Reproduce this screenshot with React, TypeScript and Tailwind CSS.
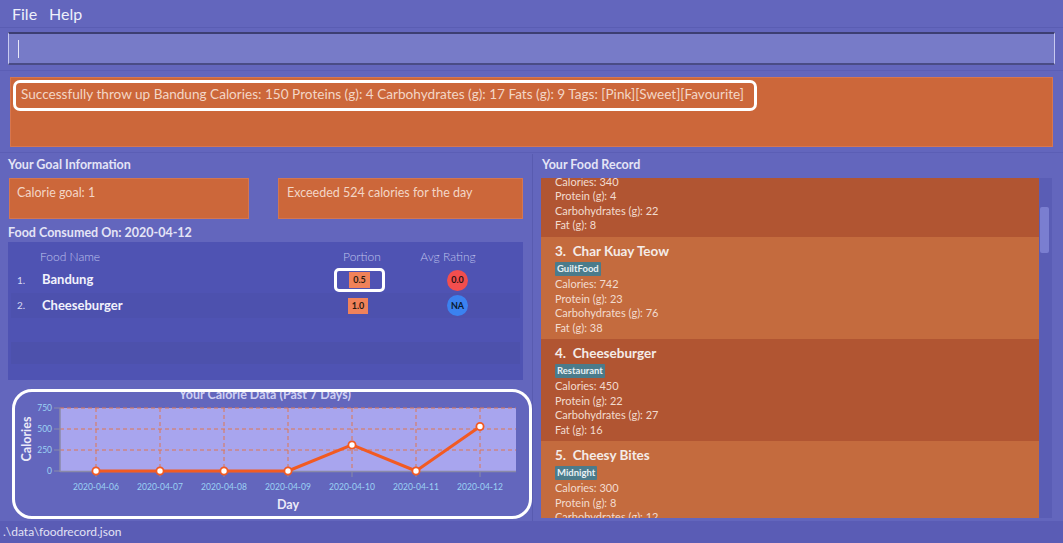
import React from "react";

const font = { fontFamily: 'Lato, "Noto Sans", sans-serif' };

type Food = { n: number; name: string; tag: string; cal: number; p: number; c: number; f: number };

const foods: Food[] = [
  { n: 3, name: "Char Kuay Teow", tag: "GuiltFood", cal: 742, p: 23, c: 76, f: 38 },
  { n: 4, name: "Cheeseburger", tag: "Restaurant", cal: 450, p: 22, c: 27, f: 16 },
  { n: 5, name: "Cheesy Bites", tag: "Midnight", cal: 300, p: 8, c: 12, f: 10 },
];

function Lines({ cal, p, c, f }: { cal: number; p: number; c: number; f: number }) {
  return (
    <div className="text-[11px] leading-[14.5px] text-[#f2dccf]">
      <div>Calories: {cal}</div>
      <div>Protein (g): {p}</div>
      <div>Carbohydrates (g): {c}</div>
      <div>Fat (g): {f}</div>
    </div>
  );
}

function Card({ f, dark }: { f: Food; dark: boolean }) {
  return (
    <div className={`h-[102px] shrink-0 pl-[14px] pt-[4px] ${dark ? "bg-[#b15532]" : "bg-[#c46b3e]"}`}>
      <div className="text-[13.5px] leading-[20px] font-bold text-[#f4ece8]">
        {f.n}.&nbsp;&nbsp;{f.name}
      </div>
      <div className="mt-[1px] mb-[1px] w-fit bg-[#4b7b8b] px-[2px] text-[9.5px] leading-[14px] font-bold text-[#e8f0f4] rounded-[1px]">
        {f.tag}
      </div>
      <Lines cal={f.cal} p={f.p} c={f.c} f={f.f} />
    </div>
  );
}

function Chart() {
  const xs = [84, 148, 212, 276, 340, 404, 468];
  const dates = ["2020-04-06", "2020-04-07", "2020-04-08", "2020-04-09", "2020-04-10", "2020-04-11", "2020-04-12"];
  const vals = [0, 0, 0, 0, 310, 0, 530];
  const y = (v: number) => 82 - (v / 750) * 63;
  const pts = xs.map((x, i) => `${x},${y(vals[i])}`).join(" ");
  return (
    <svg width="520" height="130" className="block">
      <text x="253" y="10" textAnchor="middle" fontSize="12.5" fontWeight="700" fill="#cfd0f2" style={font}>
        Your Calorie Data (Past 7 Days)
      </text>
      <rect x="48" y="19" width="456" height="63" fill="#a8a5ee" />
      {[19, 40, 61].map((yy) => (
        <line key={yy} x1="48" x2="504" y1={yy} y2={yy} stroke="#de7650" strokeWidth="1" strokeDasharray="4 3" />
      ))}
      {xs.map((x) => (
        <line key={x} x1={x} x2={x} y1="19" y2="82" stroke="#de7650" strokeWidth="1" strokeDasharray="4 3" />
      ))}
      <line x1="48" x2="504" y1="82.5" y2="82.5" stroke="#8a8aa8" strokeWidth="1.5" />
      <line x1="48" x2="48" y1="19" y2="83" stroke="#8a8aa8" strokeWidth="1.5" />
      {[
        [19, "750"],
        [40, "500"],
        [61, "250"],
        [82, "0"],
      ].map(([yy, l]) => (
        <g key={l as string}>
          <line x1="42" x2="48" y1={yy as number} y2={yy as number} stroke="#8a8aa8" strokeWidth="1" />
          <text x="40" y={(yy as number) + 3} textAnchor="end" fontSize="8.5" fill="#9cd2f4" style={font}>
            {l}
          </text>
        </g>
      ))}
      {xs.map((x, i) => (
        <g key={"t" + x}>
          <line x1={x} x2={x} y1="83" y2="88" stroke="#8a8aa8" strokeWidth="1" />
          <text x={x} y="101" textAnchor="middle" fontSize="8.5" fill="#9cd2f4" style={font}>
            {dates[i]}
          </text>
        </g>
      ))}
      <text x="276" y="120" textAnchor="middle" fontSize="12.5" fontWeight="700" fill="#eceaf8" style={font}>
        Day
      </text>
      <text
        x="0"
        y="0"
        transform="translate(19 50) rotate(-90)"
        textAnchor="middle"
        fontSize="12.5"
        fontWeight="700"
        fill="#eceaf8"
        style={font}
      >
        Calories
      </text>
      <polyline points={pts} fill="none" stroke="#f25a22" strokeWidth="3" strokeLinejoin="round" />
      {xs.map((x, i) => (
        <circle key={"c" + x} cx={x} cy={y(vals[i])} r="3.6" fill="#ffffff" stroke="#f25a22" strokeWidth="1.8" />
      ))}
    </svg>
  );
}

export default function App() {
  return (
    <div className="w-[1063px] h-[543px] bg-[#6366bd] flex flex-col overflow-hidden text-[#e6e6f6]" style={font}>
      {/* menu */}
      <div className="h-[28px] flex items-center gap-[12px] pl-[12px] text-[16px] text-[#eef0fa] border-b border-[#5a5db3]">
        <span>File</span>
        <span>Help</span>
      </div>
      {/* command box */}
      <div className="px-[8px] pt-[4px] pb-[5px] border-b border-[#5b5eb5]">
        <div className="h-[33px] bg-[#777bc8] border-t-2 border-b-2 border-t-[#3c3e72] border-b-[#4a4c86] border-l border-l-[#c8caf0] border-r border-r-[#c8caf0] flex items-center pl-[9px]">
          <div className="w-[1px] h-[18px] bg-[#e8e8f8]" />
        </div>
      </div>
      {/* result */}
      <div className="px-[10px] pt-[6px] pb-[5px] border-b border-[#5b5eb5]">
        <div className="h-[70px] bg-[#cc673a] border border-[#d67650] pl-[2px] pt-[2px]">
          <span className="block w-fit border-[3px] border-white rounded-[7px] pl-[5px] pr-[10px] h-[31px] leading-[23px] text-[13.6px] text-[#f3d6c6] whitespace-nowrap">
            Successfully throw up Bandung Calories: 150 Proteins (g): 4 Carbohydrates (g): 17 Fats (g): 9 Tags: [Pink][Sweet][Favourite]
          </span>
        </div>
      </div>
      {/* main */}
      <div className="flex flex-1 min-h-0 pt-[1px]">
        {/* left */}
        <div className="w-[533px] shrink-0 border-r border-[#585bb0] pl-[8px] flex flex-col relative">
          <div className="h-[24px] pt-[2px] text-[12.5px] leading-[18px] font-bold text-[#e4e4f6]">Your Goal Information</div>
          <div className="flex justify-between pr-[9px] pl-[1px] h-[41px]">
            <div className="w-[240px] bg-[#cc673a] border border-[#d37652] pl-[7px] pt-[5px] text-[12.5px] text-[#f3d6c6]">Calorie goal: 1</div>
            <div className="w-[245px] bg-[#cc673a] border border-[#d37652] pl-[8px] pt-[5px] text-[12.5px] text-[#f3d6c6]">
              Exceeded 524 calories for the day
            </div>
          </div>
          <div className="h-[23px] pt-[5px] text-[12.5px] leading-[18px] font-bold text-[#e4e4f6]">Food Consumed On: 2020-04-12</div>
          <div className="w-[515px] h-[138px] bg-[#4f53b3] px-[3px] flex flex-col">
            <div className="h-[25px] flex items-end pb-[1px] text-[12px] text-[#bfc2ec] font-light">
              <span className="pl-[29px] w-[321px]">Food Name</span>
              <span className="w-[60px] text-center">Portion</span>
              <span className="ml-[26px] w-[60px] text-center">Avg Rating</span>
            </div>
            <div className="h-[26px] flex items-center">
              <span className="w-[31px] pl-[6px] text-[10px] text-[#d8daf4]">1.</span>
              <span className="w-[292px] text-[13px] font-bold text-[#f2f2fc]">Bandung</span>
              <span className="w-[51px] h-[24px] border-[3px] border-white rounded-[5px] flex items-center justify-center">
                <span className="bg-[#f0825a] text-[#2a1a10] text-[9px] font-bold w-[21px] text-center leading-[16px]">0.5</span>
              </span>
              <span className="ml-[62px] w-[21px] h-[21px] rounded-full bg-[#f24e4e] text-[#2a1010] text-[9px] font-bold flex items-center justify-center">0.0</span>
            </div>
            <div className="h-[25px] flex items-center bg-[#4d51ae]">
              <span className="w-[31px] pl-[6px] text-[10px] text-[#d8daf4]">2.</span>
              <span className="w-[292px] text-[13px] font-bold text-[#f2f2fc]">Cheeseburger</span>
              <span className="w-[51px] flex items-center justify-center pr-[3px]">
                <span className="bg-[#f0825a] text-[#2a1a10] text-[9px] font-bold w-[20px] text-center leading-[16px]">1.0</span>
              </span>
              <span className="ml-[62px] w-[21px] h-[21px] rounded-full bg-[#3b82f0] text-[#0a1a30] text-[9px] font-bold flex items-center justify-center">NA</span>
            </div>
            <div className="h-[24px]" />
            <div className="h-[22px] bg-[#4d51ac]" />
          </div>
          <div className="relative mt-[9px] ml-[4px] w-[520px] h-[130px]">
            <Chart />
            <div className="absolute inset-0 border-[3px] border-white rounded-[20px] pointer-events-none" />
          </div>
        </div>
        {/* right */}
        <div className="flex-1 pl-[8px] flex flex-col">
          <div className="h-[24px] pt-[2px] pl-[1px] text-[12.5px] leading-[18px] font-bold text-[#e4e4f6]">Your Food Record</div>
          <div className="w-[511px] h-[340px] bg-[#5a5db5] flex overflow-hidden">
            <div className="w-[498px] overflow-hidden flex flex-col">
              <div className="h-[59px] shrink-0 bg-[#b15532] pl-[14px] pb-[4.5px] flex flex-col justify-end overflow-hidden">
                <Lines cal={340} p={4} c={22} f={8} />
              </div>
              {foods.map((f, i) => (
                <Card key={f.n} f={f} dark={i % 2 === 1} />
              ))}
            </div>
            <div className="flex-1 pt-[29px] pl-[1px]">
              <div className="w-[9px] h-[46px] rounded-[2px] bg-[#7a7ed0]" />
            </div>
          </div>
        </div>
      </div>
      <div className="h-[22px] bg-[#5a5cb5] pl-[3px] text-[12px] leading-[22px] text-[#e2e2f4]">.\data\foodrecord.json</div>
    </div>
  );
}
